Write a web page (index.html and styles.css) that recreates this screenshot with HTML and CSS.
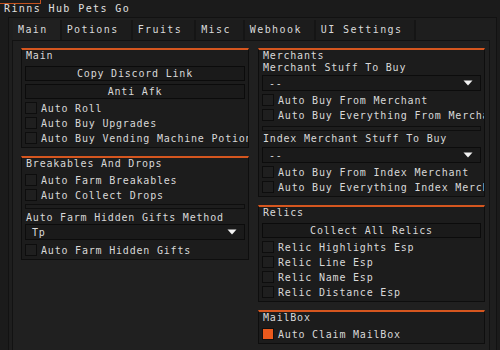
FILE: index.html
```html
<!DOCTYPE html>
<html>
<head>
<meta charset="utf-8">
<link rel="stylesheet" href="styles.css">
</head>
<body>
<div class="window">
  <div class="accent"></div>
  <div class="title">Rinns Hub Pets Go</div>
  <div class="frame">
    <div class="tabs">
      <div class="tab active">Main</div>
      <div class="tab">Potions</div>
      <div class="tab">Fruits</div>
      <div class="tab">Misc</div>
      <div class="tab">Webhook</div>
      <div class="tab">UI Settings</div>
    </div>
    <div class="content">
      <div class="col">
        <div class="group">
          <div class="gtitle">Main</div>
          <div class="btn first">Copy Discord Link</div>
          <div class="btn">Anti Afk</div>
          <div class="cb"><span class="box"></span><span>Auto Roll</span></div>
          <div class="cb"><span class="box"></span><span>Auto Buy Upgrades</span></div>
          <div class="cb"><span class="box"></span><span>Auto Buy Vending Machine Potions</span></div>
        </div>
        <div class="group">
          <div class="gtitle">Breakables And Drops</div>
          <div class="cb first"><span class="box"></span><span>Auto Farm Breakables</span></div>
          <div class="cb"><span class="box"></span><span>Auto Collect Drops</span></div>
          <div class="divider"></div>
          <div class="label">Auto Farm Hidden Gifts Method</div>
          <div class="dropdown"><span>Tp</span><svg class="arrow" width="10" height="6" viewBox="0 0 10 6"><path d="M0.5 0.5 L9.5 0.5 L5 5.5 Z" fill="#f2f2f2"/></svg></div>
          <div class="cb first"><span class="box"></span><span>Auto Farm Hidden Gifts</span></div>
        </div>
      </div>
      <div class="col">
        <div class="group">
          <div class="gtitle">Merchants</div>
          <div class="label">Merchant Stuff To Buy</div>
          <div class="dropdown tight"><span>--</span><svg class="arrow" width="10" height="6" viewBox="0 0 10 6"><path d="M0.5 0.5 L9.5 0.5 L5 5.5 Z" fill="#f2f2f2"/></svg></div>
          <div class="cb"><span class="box"></span><span>Auto Buy From Merchant</span></div>
          <div class="cb"><span class="box"></span><span>Auto Buy Everything From Merchant</span></div>
          <div class="divider wide"></div>
          <div class="label small">Index Merchant Stuff To Buy</div>
          <div class="dropdown mid"><span>--</span><svg class="arrow" width="10" height="6" viewBox="0 0 10 6"><path d="M0.5 0.5 L9.5 0.5 L5 5.5 Z" fill="#f2f2f2"/></svg></div>
          <div class="cb"><span class="box"></span><span>Auto Buy From Index Merchant</span></div>
          <div class="cb"><span class="box"></span><span>Auto Buy Everything Index Merchant</span></div>
        </div>
        <div class="group">
          <div class="gtitle">Relics</div>
          <div class="btn first">Collect All Relics</div>
          <div class="cb"><span class="box"></span><span>Relic Highlights Esp</span></div>
          <div class="cb"><span class="box"></span><span>Relic Line Esp</span></div>
          <div class="cb"><span class="box"></span><span>Relic Name Esp</span></div>
          <div class="cb"><span class="box"></span><span>Relic Distance Esp</span></div>
        </div>
        <div class="group">
          <div class="gtitle">MailBox</div>
          <div class="cb first"><span class="box on"></span><span>Auto Claim MailBox</span></div>
        </div>
      </div>
    </div>
  </div>
</div>
</body>
</html>
```
FILE: styles.css
```css
html, body {
  margin: 0;
  padding: 0;
}
body {
  width: 500px;
  height: 350px;
  overflow: hidden;
  background: #1b1b1b;
  font-family: "DejaVu Sans Mono", monospace;
  font-size: 10px;
  letter-spacing: 0.8px;
  color: #d8d8d8;
}
.window {
  position: relative;
  height: 350px;
}
.accent {
  position: absolute;
  left: -2px;
  top: -10px;
  width: 41px;
  height: 12px;
  border: 1px solid #c4521f;
}
.title {
  height: 17px;
  line-height: 17px;
  padding-left: 4px;
  letter-spacing: 1.4px;
  color: #e0e0e0;
}
.frame {
  margin: 0 3px 0 8px;
  height: 333px;
  box-sizing: border-box;
  border: 1px solid #121212;
  border-bottom: none;
  background: #1e1e1e;
  padding: 2px 0 0 3px;
  display: flex;
  flex-direction: column;
}
.tabs {
  display: flex;
  height: 20px;
  padding-left: 1px;
}
.tab {
  padding: 0 12px 0 5px;
  line-height: 20px;
  letter-spacing: 1.4px;
  border-right: 2px solid #151515;
  background: #1c1c1c;
  color: #dadada;
}
.tab.active {
  background: #202020;
}
.content {
  flex: 1;
  margin-right: 6px;
  border: 1px solid #121212;
  border-bottom: none;
  background: #202020;
  padding: 7px 0 0 8px;
  display: grid;
  grid-template-columns: 228px 227px;
  column-gap: 9px;
  align-content: start;
}
.col {
  display: flex;
  flex-direction: column;
  min-width: 0;
}
.group {
  border: 1px solid #0e0e0e;
  border-top: 2px solid #d5561f;
  background: #1c1c1c;
  padding: 0 3px 3px 3px;
  margin-bottom: 8px;
  overflow: hidden;
  white-space: nowrap;
  display: flex;
  flex-direction: column;
}
.gtitle, .label {
  height: 12px;
  line-height: 12px;
  padding-left: 1px;
}
.label.small {
  margin-top: 2px;
}
.btn {
  height: 15px;
  box-sizing: border-box;
  border: 1px solid #0b0b0b;
  background: #1a1a1a;
  text-align: center;
  line-height: 13px;
  margin-top: 3px;
}
.btn.first {
  margin-top: 4px;
}
.cb {
  display: flex;
  align-items: center;
  height: 12px;
  margin-top: 3px;
}
.cb.first {
  margin-top: 4px;
}
.box {
  flex: none;
  width: 12px;
  height: 12px;
  box-sizing: border-box;
  border: 1px solid #0d0d0d;
  background: #1f1f1f;
  margin-right: 4px;
}
.box.on {
  background: #e8591d;
  border-color: #101010;
}
.divider {
  height: 5px;
  box-sizing: border-box;
  border: 1px solid #0e0e0e;
  background: #1d1d1d;
  margin-top: 3px;
  margin-bottom: 3px;
}
.divider.wide {
  margin-top: 5px;
  margin-bottom: 0;
}
.dropdown {
  height: 16px;
  box-sizing: border-box;
  border: 1px solid #0c0c0c;
  background: #1a1a1a;
  display: flex;
  align-items: center;
  justify-content: space-between;
  padding: 0 7px 0 6px;
}
.dropdown.tight {
  margin-top: 1px;
}
.dropdown.mid {
  margin-top: 2px;
}
.arrow {
  display: block;
}
```
